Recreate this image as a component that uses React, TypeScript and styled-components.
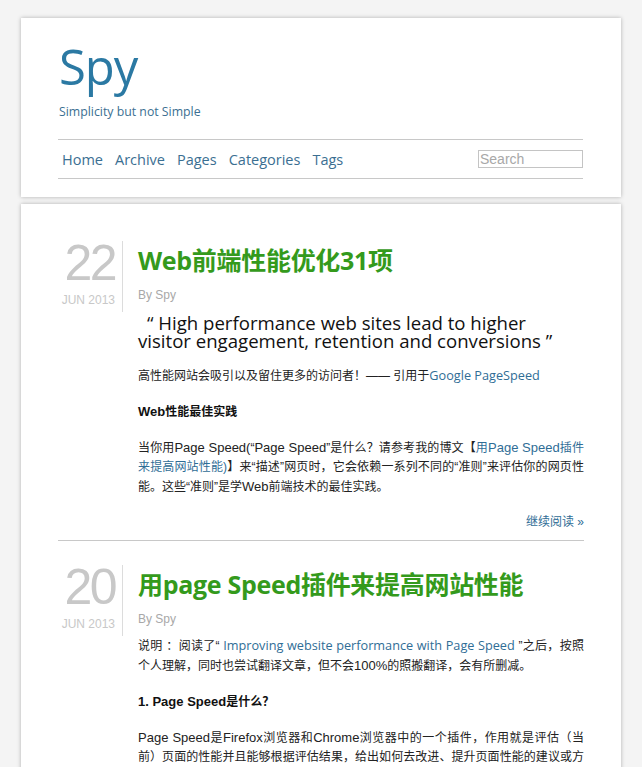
import React from "react";
import styled, { createGlobalStyle } from "styled-components";

const GlobalStyle = createGlobalStyle`
  html, body { margin: 0; padding: 0; }
  html { overflow: hidden; }
  body {
    background: #f4f4f4;
    font-family: Arial, "Liberation Sans", "Noto Sans CJK SC", sans-serif;
    color: #222;
  }
`;

const Page = styled.div`
  width: 600px;
  margin: 0 auto;
  padding-top: 18px;
  display: flex;
  flex-direction: column;
  gap: 7px;
`;

const Card = styled.div`
  background: #fff;
  box-shadow: 0 0 4px rgba(0, 0, 0, 0.28);
`;

const HeaderCard = styled(Card)`
  padding: 20px 38px 18px 37px;
`;

const Logo = styled.h1`
  margin: 0 0 0 1px;
  font-family: "Open Sans", "Noto Sans", sans-serif;
  font-weight: 400;
  font-size: 49px;
  line-height: 56px;
  color: #2b79a3;
  letter-spacing: -1px;
`;

const Tagline = styled.div`
  margin: 9px 0 0 1px;
  font-family: "Open Sans", "Noto Sans", sans-serif;
  font-size: 12.3px;
  line-height: 18px;
  color: #3b6f92;
`;

const Nav = styled.nav`
  margin-top: 18px;
  height: 38px;
  border-top: 1px solid #c8c8c8;
  border-bottom: 1px solid #c8c8c8;
  display: flex;
  align-items: center;
  justify-content: space-between;
  padding: 0 0 0 4px;
`;

const NavList = styled.div`
  display: flex;
  gap: 12px;
`;

const NavLink = styled.a`
  font-family: "Open Sans", "Noto Sans", sans-serif;
  font-size: 14.5px;
  color: #3b6f92;
  text-decoration: none;
`;

const Search = styled.input`
  width: 105px;
  height: 18px;
  box-sizing: border-box;
  border: 1px solid #c4c4c4;
  padding: 0 1px;
  font-family: Arial, "Liberation Sans", sans-serif;
  font-size: 14px;
  color: #444;
  outline: none;
  &::placeholder { color: #a8a8a8; }
`;

const MainCard = styled(Card)`
  padding: 37px 37px 0 37px;
`;

const Post = styled.article<{ $last?: boolean }>`
  display: flex;
  padding-bottom: ${(p) => (p.$last ? "40px" : "8px")};
  margin-bottom: 24px;
  border-bottom: ${(p) => (p.$last ? "none" : "1px solid #c8c8c8")};
`;

const DateCol = styled.div`
  width: 65px;
  flex: none;
  align-self: flex-start;
  box-sizing: border-box;
  border-right: 1px solid #dcdcdc;
  padding-right: 7px;
  text-align: right;
  font-family: Arial, "Liberation Sans", sans-serif;
  color: #c8c8c8;
`;

const Day = styled.div`
  font-size: 50px;
  line-height: 44px;
  letter-spacing: -2.5px;
`;

const Month = styled.div`
  font-size: 12px;
  line-height: 16px;
  margin-top: 7px;
  padding-bottom: 4px;
`;

const Body = styled.div`
  flex: 1;
  min-width: 0;
  padding-left: 15px;
`;

const Title = styled.h2`
  margin: 2px 0 0;
  font-family: "Open Sans", "Noto Sans CJK SC", sans-serif;
  font-weight: 700;
  font-size: 25px;
  line-height: 34px;
  color: #349a1c;
  letter-spacing: -0.3px;
`;

const Byline = styled.div`
  margin-top: 10px;
  font-size: 12px;
  line-height: 16px;
  color: #a8a8a8;
`;

const Quote = styled.div`
  margin-top: 11px;
  max-width: 420px;
  font-family: "Open Sans", "Noto Sans", sans-serif;
  font-size: 18.6px;
  line-height: 18px;
  color: #111;
  text-indent: 9px;
`;

const Para = styled.p`
  margin: 16px 0 0;
  font-family: Arial, "Liberation Sans", "Noto Sans CJK SC", sans-serif;
  font-size: 12px;
  line-height: 19px;
  color: #222;
  text-align: justify;
  ${Byline} + & { margin-top: 9px; }
`;

const En = styled.span`
  font-size: 13px;
`;

const Strong = styled.p`
  margin: 16px 0 0;
  font-family: Arial, "Liberation Sans", "Noto Sans CJK SC", sans-serif;
  font-weight: 700;
  font-size: 12px;
  line-height: 19px;
  color: #111;
`;

const Link = styled.a<{ $seg?: boolean }>`
  color: #2f6d96;
  text-decoration: none;
  font-family: ${(p) => (p.$seg ? '"Open Sans", "Noto Sans", "Noto Sans CJK SC", sans-serif' : "inherit")};
  font-size: ${(p) => (p.$seg ? "12.7px" : "inherit")};
`;

const More = styled.div`
  margin-top: 16px;
  text-align: right;
  font-size: 12px;
  line-height: 19px;
`;

export default function App() {
  return (
    <>
      <GlobalStyle />
      <Page>
        <HeaderCard>
          <Logo>Spy</Logo>
          <Tagline>Simplicity but not Simple</Tagline>
          <Nav>
            <NavList>
              <NavLink href="#">Home</NavLink>
              <NavLink href="#">Archive</NavLink>
              <NavLink href="#">Pages</NavLink>
              <NavLink href="#">Categories</NavLink>
              <NavLink href="#">Tags</NavLink>
            </NavList>
            <Search placeholder="Search" />
          </Nav>
        </HeaderCard>
        <MainCard>
          <Post>
            <DateCol>
              <Day>22</Day>
              <Month>JUN 2013</Month>
            </DateCol>
            <Body>
              <Title>Web前端性能优化31项</Title>
              <Byline>By Spy</Byline>
              <Quote>
                “ High performance web sites lead to higher visitor engagement, retention and conversions ”
              </Quote>
              <Para>
                高性能网站会吸引以及留住更多的访问者！—— 引用于<Link href="#" $seg>Google PageSpeed</Link>
              </Para>
              <Strong><En>Web</En>性能最佳实践</Strong>
              <Para>
                当你用<En>Page Speed(</En>“<En>Page Speed</En>”是什么？请参考我的博文【<Link href="#">用<En>Page Speed</En>插件来提高网站性能)</Link>】来“描述”网页时，它会依赖一系列不同的“准则”来评估你的网页性能。这些“准则”是学<En>Web</En>前端技术的最佳实践。
              </Para>
              <More>
                <Link href="#">继续阅读 »</Link>
              </More>
            </Body>
          </Post>
          <Post $last>
            <DateCol>
              <Day>20</Day>
              <Month>JUN 2013</Month>
            </DateCol>
            <Body>
              <Title>用page Speed插件来提高网站性能</Title>
              <Byline>By Spy</Byline>
              <Para>
                说明 ：阅读了“<Link href="#" $seg> Improving website performance with Page Speed </Link>”之后，按照个人理解，同时也尝试翻译文章，但不会<En>100%</En>的照搬翻译，会有所删减。
              </Para>
              <Strong><En>1. Page Speed</En>是什么？</Strong>
              <Para>
                <En>Page Speed</En>是<En>Firefox</En>浏览器和<En>Chrome</En>浏览器中的一个插件，作用就是评估（当前）页面的性能并且能够根据评估结果，给出如何去改进、提升页面性能的建议或方案。
              </Para>
            </Body>
          </Post>
        </MainCard>
      </Page>
    </>
  );
}
